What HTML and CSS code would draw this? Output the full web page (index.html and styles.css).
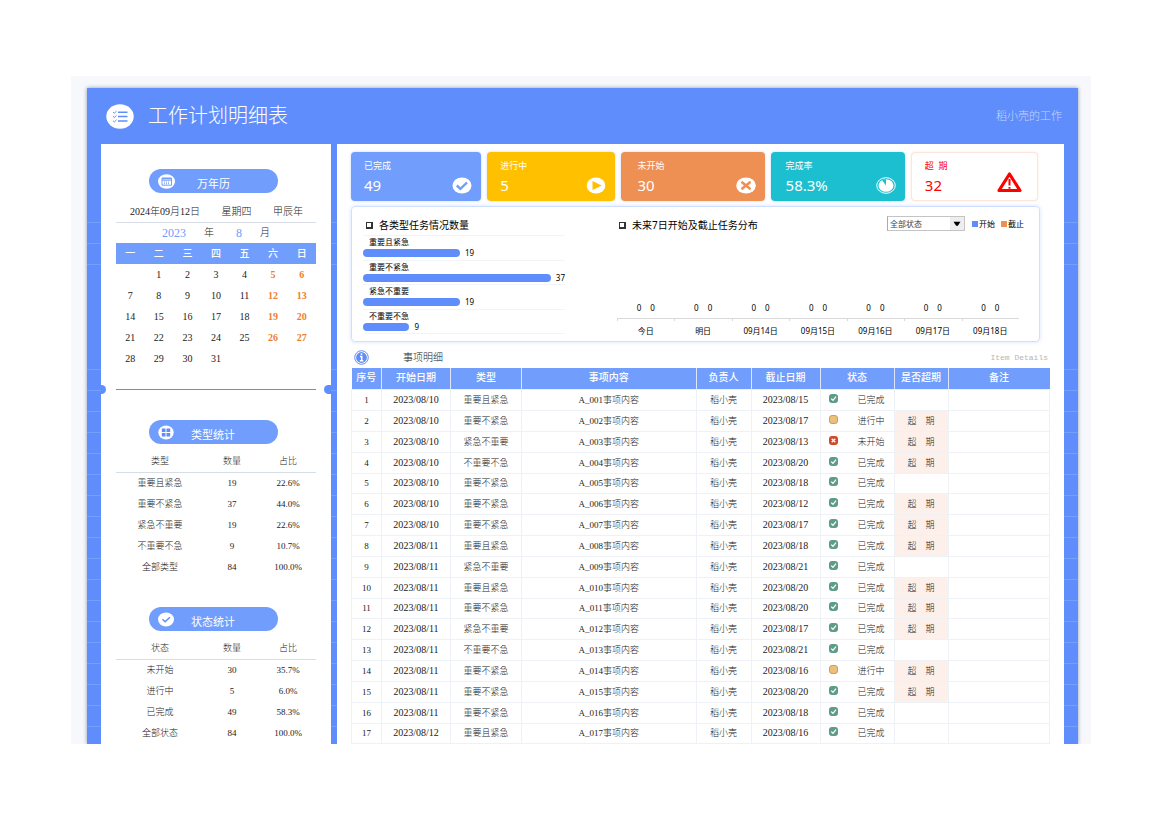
FILE: index.html
```html
<!DOCTYPE html>
<html lang="zh-CN">
<head>
<meta charset="utf-8">
<title>工作计划明细表</title>
<link rel="stylesheet" href="styles.css">
</head>
<body>
<svg class="symbols" aria-hidden="true">
  <symbol id="done" viewBox="0 0 9 9"><rect width="9" height="9" rx="3" fill="#5d9c86"/><path d="M2.2 4.6 4 6.3 7 2.7" fill="none" stroke="#fff" stroke-width="1.3"/></symbol>
  <symbol id="doing" viewBox="0 0 9 9"><rect x=".5" y=".5" width="8" height="8" rx="2.6" fill="#eac07a" stroke="#c79d5c"/></symbol>
  <symbol id="todo" viewBox="0 0 9 9"><rect width="9" height="9" rx="3" fill="#cf4a2c"/><path d="m2.7 2.7 3.6 3.6m0-3.6L2.7 6.3" fill="none" stroke="#fff" stroke-width="1.3"/></symbol>
</svg>
<div class="sheet">
  <div class="board">
    <header class="top">
      <svg class="logo" viewBox="0 0 28 25"><ellipse cx="14" cy="12.5" rx="13.7" ry="12.2" fill="#fff"/><path d="M12 8.2h9.5M12 12.6h9.5M12 17h9.5" stroke="#5f8dfb" stroke-width="1.5"/><path d="m7 8 1.3 1.2 2.2-2.1M7 12.3l1.3 1.2 2.2-2.1M7 16.8 8.3 18l2.2-2.1" fill="none" stroke="#5f8dfb"/></svg>
      <h1>工作计划明细表</h1>
      <span class="owner">稻小壳的工作</span>
    </header>
    <div class="body">
      <aside class="side">
        <section>
          <h2 class="pill">
            <svg viewBox="0 0 17 15"><ellipse cx="8.5" cy="7.5" rx="8.5" ry="7.3" fill="#fff"/><path d="M4 4.2h9.5v7H4zM4 6.2h9.5M6 8h1m1 0h1m1 0h1m-5 1.7h1m1 0h1m1 0h1" fill="none" stroke="#719dfd"/><path d="M4 4.5h9.5" stroke="#719dfd" stroke-width="1.6"/></svg>
            <span class="short">万年历</span>
          </h2>
          <p class="today"><span>2024年09月12日</span><span>星期四</span><span>甲辰年</span></p>
          <p class="month"><b>2023</b><span>年</span><b>8</b><span>月</span></p>
          <table class="calendar">
            <thead><tr><th>一</th><th>二</th><th>三</th><th>四</th><th>五</th><th>六</th><th>日</th></tr></thead>
            <tbody>
              <tr><td></td><td>1</td><td>2</td><td>3</td><td>4</td><td>5</td><td>6</td></tr>
              <tr><td>7</td><td>8</td><td>9</td><td>10</td><td>11</td><td>12</td><td>13</td></tr>
              <tr><td>14</td><td>15</td><td>16</td><td>17</td><td>18</td><td>19</td><td>20</td></tr>
              <tr><td>21</td><td>22</td><td>23</td><td>24</td><td>25</td><td>26</td><td>27</td></tr>
              <tr><td>28</td><td>29</td><td>30</td><td>31</td><td></td><td></td><td></td></tr>
            </tbody>
          </table>
        </section>
        <div class="tear"><i></i><hr><i></i></div>
        <section>
          <h2 class="pill">
            <svg viewBox="0 0 17 15"><ellipse cx="8" cy="7.5" rx="7.7" ry="7" fill="#fff"/><path d="M3.8 3.500h3.700v3.500H3.800zM8.500 3.500h3.700v3.500H8.500zM3.800 8h3.700v3.500H3.800zM8.500 8h3.700v3.500H8.500z" fill="#5f8dfb"/></svg>
            <span>类型统计</span>
          </h2>
          <table class="stats">
            <thead><tr><th>类型</th><th>数量</th><th>占比</th></tr></thead>
            <tbody>
              <tr><td>重要且紧急</td><td>19</td><td>22.6%</td></tr>
              <tr><td>重要不紧急</td><td>37</td><td>44.0%</td></tr>
              <tr><td>紧急不重要</td><td>19</td><td>22.6%</td></tr>
              <tr><td>不重要不急</td><td>9</td><td>10.7%</td></tr>
              <tr><td>全部类型</td><td>84</td><td>100.0%</td></tr>
            </tbody>
          </table>
        </section>
        <section>
          <h2 class="pill">
            <svg viewBox="0 0 17 15"><ellipse cx="8" cy="7.5" rx="8" ry="7" fill="#fff"/><path d="m4.5 7.3 2.6 2.4 4.8-4.5" fill="none" stroke="#5f8dfb" stroke-width="1.5"/></svg>
            <span>状态统计</span>
          </h2>
          <table class="stats">
            <thead><tr><th>状态</th><th>数量</th><th>占比</th></tr></thead>
            <tbody>
              <tr><td>未开始</td><td>30</td><td>35.7%</td></tr>
              <tr><td>进行中</td><td>5</td><td>6.0%</td></tr>
              <tr><td>已完成</td><td>49</td><td>58.3%</td></tr>
              <tr><td>全部状态</td><td>84</td><td>100.0%</td></tr>
            </tbody>
          </table>
        </section>
      </aside>

      <main class="main">
        <div class="cards">
          <div class="card blue"><div><p>已完成</p><strong>49</strong></div>
            <svg viewBox="0 0 20 17"><ellipse cx="10" cy="8.5" rx="9.5" ry="8" fill="#fff"/><path d="m4.8 8.5 3.6 3.3 6.6-6.3" fill="none" stroke="#719dfd" stroke-width="2.4"/></svg></div>
          <div class="card yellow"><div><p>进行中</p><strong>5</strong></div>
            <svg viewBox="0 0 20 17"><ellipse cx="10" cy="8.5" rx="9.3" ry="8" fill="#fff"/><path d="M6.5 4v9l9.2-4.5z" fill="#ffc000"/></svg></div>
          <div class="card orange"><div><p>未开始</p><strong>30</strong></div>
            <svg viewBox="0 0 20 17"><ellipse cx="10" cy="8.5" rx="9.8" ry="8" fill="#fff"/><path d="m6.300 5.500 7.400 6m0-6-7.400 6" stroke="#ee8f54" stroke-width="2.6" stroke-linecap="round"/></svg></div>
          <div class="card teal"><div><p>完成率</p><strong>58.3%</strong></div>
            <svg viewBox="0 0 20 17"><ellipse cx="10" cy="8.5" rx="9.3" ry="7.8" fill="none" stroke="#fff"/><ellipse cx="10" cy="8.5" rx="7.5" ry="6.3" fill="#fff"/><path d="M10 8.500V2L6 3z" fill="#1bbfcf"/></svg></div>
          <div class="card late"><div><p>超&nbsp; 期</p><strong>32</strong></div>
            <svg class="warn" viewBox="0 0 27 22"><path d="M13.500 3 24 19.500H3z" fill="#fff" stroke="#f00" stroke-width="3.200" stroke-linejoin="round"/><path d="M13.500 8v6.500M13.500 16v1.800" stroke="#f00" stroke-width="2"/></svg></div>
        </div>

        <div class="charts">
          <section class="types">
            <h3>各类型任务情况数量</h3>
            <ul>
              <li><span>重要且紧急</span><div><i style="width:48%"></i>19</div></li>
              <li><span>重要不紧急</span><div><i style="width:93%"></i>37</div></li>
              <li><span>紧急不重要</span><div><i style="width:48%"></i>19</div></li>
              <li><span>不重要不急</span><div><i style="width:23%"></i>9</div></li>
            </ul>
          </section>
          <section class="week">
            <div class="week-head">
              <h3>未来7日开始及截止任务分布</h3>
              <div class="picker">
                <select aria-label="状态筛选"><option>全部状态</option><option>未开始</option><option>进行中</option><option>已完成</option></select>
                <svg viewBox="0 0 14 15"><path d="M3 5.500h8L8 10H6z"/></svg>
              </div>
              <span class="key start">开始</span><span class="key end">截止</span>
            </div>
            <ol>
              <li><p><b>0</b><b>0</b></p><span>今日</span></li>
              <li><p><b>0</b><b>0</b></p><span>明日</span></li>
              <li><p><b>0</b><b>0</b></p><span>09月14日</span></li>
              <li><p><b>0</b><b>0</b></p><span>09月15日</span></li>
              <li><p><b>0</b><b>0</b></p><span>09月16日</span></li>
              <li><p><b>0</b><b>0</b></p><span>09月17日</span></li>
              <li><p><b>0</b><b>0</b></p><span>09月18日</span></li>
            </ol>
          </section>
        </div>

        <div class="list-head">
          <svg viewBox="0 0 15 15"><circle cx="7.500" cy="7.500" r="6.800" fill="#fff" stroke="#5f8dfb"/><circle cx="7.500" cy="7.500" r="5.400" fill="#5f8dfb"/><path d="M7.500 3.300v1.800M6 6.500h1.700v4M5.800 10.800h3.500" fill="none" stroke="#fff" stroke-width="1.500"/></svg>
          <h3>事项明细</h3>
          <span>Item Details</span>
        </div>
        <table class="items">
          <colgroup><col class="c-no"><col class="c-date"><col class="c-type"><col class="c-text"><col class="c-who"><col class="c-date"><col class="c-state"><col class="c-late"><col></colgroup>
          <thead><tr><th>序号</th><th>开始日期</th><th>类型</th><th>事项内容</th><th>负责人</th><th>截止日期</th><th>状态</th><th>是否超期</th><th>备注</th></tr></thead>
          <tbody>
            <tr><td>1</td><td class="d">2023/08/10</td><td>重要且紧急</td><td>A_001事项内容</td><td>稻小壳</td><td class="d">2023/08/15</td><td><div class="state"><svg><use href="#done"/></svg>已完成</div></td><td></td><td></td></tr>
            <tr><td>2</td><td class="d">2023/08/10</td><td>重要不紧急</td><td>A_002事项内容</td><td>稻小壳</td><td class="d">2023/08/17</td><td><div class="state"><svg><use href="#doing"/></svg>进行中</div></td><td class="over">超　期</td><td></td></tr>
            <tr><td>3</td><td class="d">2023/08/10</td><td>紧急不重要</td><td>A_003事项内容</td><td>稻小壳</td><td class="d">2023/08/13</td><td><div class="state"><svg><use href="#todo"/></svg>未开始</div></td><td class="over">超　期</td><td></td></tr>
            <tr><td>4</td><td class="d">2023/08/10</td><td>不重要不急</td><td>A_004事项内容</td><td>稻小壳</td><td class="d">2023/08/20</td><td><div class="state"><svg><use href="#done"/></svg>已完成</div></td><td class="over">超　期</td><td></td></tr>
            <tr><td>5</td><td class="d">2023/08/10</td><td>重要不紧急</td><td>A_005事项内容</td><td>稻小壳</td><td class="d">2023/08/18</td><td><div class="state"><svg><use href="#done"/></svg>已完成</div></td><td></td><td></td></tr>
            <tr><td>6</td><td class="d">2023/08/10</td><td>重要不紧急</td><td>A_006事项内容</td><td>稻小壳</td><td class="d">2023/08/12</td><td><div class="state"><svg><use href="#done"/></svg>已完成</div></td><td class="over">超　期</td><td></td></tr>
            <tr><td>7</td><td class="d">2023/08/10</td><td>重要不紧急</td><td>A_007事项内容</td><td>稻小壳</td><td class="d">2023/08/17</td><td><div class="state"><svg><use href="#done"/></svg>已完成</div></td><td class="over">超　期</td><td></td></tr>
            <tr><td>8</td><td class="d">2023/08/11</td><td>重要且紧急</td><td>A_008事项内容</td><td>稻小壳</td><td class="d">2023/08/18</td><td><div class="state"><svg><use href="#done"/></svg>已完成</div></td><td class="over">超　期</td><td></td></tr>
            <tr><td>9</td><td class="d">2023/08/11</td><td>紧急不重要</td><td>A_009事项内容</td><td>稻小壳</td><td class="d">2023/08/21</td><td><div class="state"><svg><use href="#done"/></svg>已完成</div></td><td></td><td></td></tr>
            <tr><td>10</td><td class="d">2023/08/11</td><td>重要且紧急</td><td>A_010事项内容</td><td>稻小壳</td><td class="d">2023/08/20</td><td><div class="state"><svg><use href="#done"/></svg>已完成</div></td><td class="over">超　期</td><td></td></tr>
            <tr><td>11</td><td class="d">2023/08/11</td><td>重要不紧急</td><td>A_011事项内容</td><td>稻小壳</td><td class="d">2023/08/20</td><td><div class="state"><svg><use href="#done"/></svg>已完成</div></td><td class="over">超　期</td><td></td></tr>
            <tr><td>12</td><td class="d">2023/08/11</td><td>紧急不重要</td><td>A_012事项内容</td><td>稻小壳</td><td class="d">2023/08/17</td><td><div class="state"><svg><use href="#done"/></svg>已完成</div></td><td class="over">超　期</td><td></td></tr>
            <tr><td>13</td><td class="d">2023/08/11</td><td>不重要不急</td><td>A_013事项内容</td><td>稻小壳</td><td class="d">2023/08/21</td><td><div class="state"><svg><use href="#done"/></svg>已完成</div></td><td></td><td></td></tr>
            <tr><td>14</td><td class="d">2023/08/11</td><td>重要不紧急</td><td>A_014事项内容</td><td>稻小壳</td><td class="d">2023/08/16</td><td><div class="state"><svg><use href="#doing"/></svg>进行中</div></td><td class="over">超　期</td><td></td></tr>
            <tr><td>15</td><td class="d">2023/08/11</td><td>重要不紧急</td><td>A_015事项内容</td><td>稻小壳</td><td class="d">2023/08/20</td><td><div class="state"><svg><use href="#done"/></svg>已完成</div></td><td class="over">超　期</td><td></td></tr>
            <tr><td>16</td><td class="d">2023/08/11</td><td>重要不紧急</td><td>A_016事项内容</td><td>稻小壳</td><td class="d">2023/08/18</td><td><div class="state"><svg><use href="#done"/></svg>已完成</div></td><td></td><td></td></tr>
            <tr><td>17</td><td class="d">2023/08/12</td><td>重要且紧急</td><td>A_017事项内容</td><td>稻小壳</td><td class="d">2023/08/16</td><td><div class="state"><svg><use href="#done"/></svg>已完成</div></td><td></td><td></td></tr>
          </tbody>
        </table>
      </main>
    </div>
  </div>
</div>
</body>
</html>
```
FILE: styles.css
```css
:root {
  --blue: #5f8dfb;
  --soft: #719dfd;
  --orange: #ee8f54;
  --line: #eef2f7;
  --serif: "Liberation Serif", "Noto Sans CJK SC", serif;
  --sans: "Noto Sans", "Noto Sans CJK SC", sans-serif;
}
*, *::before { box-sizing: border-box; }
body { margin: 0; padding: 76px 79px 24px 71px; background: #fff; color: #222; font: 300 9px/14px var(--serif); }
h1, h2, h3, p, ul, ol { margin: 0; padding: 0; font-weight: inherit; list-style: none; }
table { width: 100%; border-collapse: collapse; table-layout: fixed; text-align: center; }
th, td { padding: 0; font-weight: inherit; }
svg { display: block; flex: none; }
.symbols { position: absolute; width: 0; height: 0; }

.sheet { padding: 12px 13px 0 16px; background: #f6f8fc; overflow: hidden; }
.board { background: var(--blue); box-shadow: 0 0 4px #8f9ab0; }
.top { display: flex; align-items: center; height: 56px; padding: 0 16px 0 19px; color: #fff; }
.logo { width: 28px; height: 25px; }
h1 { margin-left: 14px; font-size: 20px; line-height: 28px; }
.owner { margin-left: auto; color: #c6d7ff; font-size: 11px; line-height: 16px; }

.body {
  display: flex; gap: 6px; padding: 0 14px;
  background:
    linear-gradient(var(--blue), var(--blue)) 0 1px / 100% 77px no-repeat,
    linear-gradient(var(--blue), var(--blue)) 0 121px / 100% 103px no-repeat,
    repeating-linear-gradient(#769efc 0 1px, var(--blue) 1px 21px) 0 15px / 100% 100%;
}
.side { flex: none; width: 230px; padding: 25px 15px 0; background: #fff; }
.pill { display: flex; align-items: center; width: 129px; height: 24px; margin: 0 auto 0 33px; padding-left: 9px; border-radius: 12px; background: var(--soft); color: #fff; font: 400 11px/16px var(--sans); }
.pill svg { width: 17px; height: 15px; }
.pill span { margin-left: 16px; padding-top: 6px; }
.pill .short { margin-left: 22px; }
.today { display: flex; justify-content: space-between; height: 22px; margin-top: 8px; padding: 4px 13px 3px 14px; border-bottom: 1px solid #d9dde6; font-size: 10px; }
.month { display: grid; grid-template-columns: 27px 10px 10px 10px; column-gap: 18px; align-items: center; height: 20px; padding-left: 43px; font-size: 10px; }
.month b { color: var(--soft); font-weight: 400; font-size: 12px; text-align: right; }
.calendar { font-size: 10px; }
.calendar tr, .stats tr { height: 21px; }
.calendar thead { background: var(--soft); color: #fff; }
.calendar th { font-weight: 500; }
.calendar td:nth-child(n+6) { color: #ed7d31; font-weight: 700; }
.tear { display: flex; align-items: center; height: 9px; margin: 16px -15px 26px; }
.tear i { width: 5px; height: 9px; border-radius: 0 5px 5px 0; background: var(--blue); }
.tear i:last-child { width: 7px; border-radius: 5px 0 0 5px; }
.tear hr { flex: 1; margin: 0 15px 0 10px; margin-right: 8px; border: 0; border-top: 1px solid var(--blue); }
.stats { margin-top: 7px; }
.stats thead { border-bottom: 1px solid #d5dde6; }
.stats th { width: 28%; }
.stats th:first-child { width: 44%; }
section + section { margin-top: 30px; }

.main { flex: 1; min-width: 0; padding: 8px 14px 0; background: #fff; }
.cards { display: grid; grid-template-columns: 130fr 128fr 143fr 134fr 127fr; gap: 6px; margin-right: 12px; }
.card { display: flex; justify-content: space-between; height: 49px; padding: 7px 9px 5px 13px; border-radius: 4px; color: #fff; font-family: var(--sans); font-weight: 400; box-shadow: 0 0 3px #c9d8ff; }
.card strong { display: block; font-weight: 400; font-size: 15px; line-height: 24px; }
.card svg { align-self: flex-end; width: 20px; height: 17px; margin-bottom: 2px; }
.blue { background: var(--soft); }
.yellow { background: #ffc000; }
.orange { padding-left: 16px; background: var(--orange); }
.teal { padding-left: 15px; background: #1bbfcf; }
.late { padding-top: 6px; border: 1px solid #fde5d9; background: #fff; color: #f00; box-shadow: 0 0 2px #fde5d9; }
.card .warn { width: 27px; height: 22px; margin-right: 5px; }

.charts { display: flex; height: 136px; margin: 5px 10px 0 0; padding: 9px 15px 0 11px; border: 1px solid #d0deff; border-radius: 4px; box-shadow: 0 0 4px #d5e2ff; color: #000; font: 400 8px/12px var(--sans); }
.charts section { margin: 0; }
.charts h3 { display: flex; align-items: center; gap: 6px; padding-left: 3px; font-size: 10px; line-height: 18px; }
.charts h3::before { content: ""; width: 7px; height: 7px; border: 1px solid #333; border-width: 1px 2px 2px 1px; }
.types { flex: none; width: 202px; }
.types ul { margin-top: 1px; border-top: 1px solid #f3f4f6; }
.types li { height: 25px; border-bottom: 1px solid #f3f4f6; }
.types li:nth-child(even) { height: 24px; }
.types span { display: block; padding-left: 6px; }
.types div { display: flex; align-items: center; gap: 5px; height: 10px; white-space: nowrap; }
.types i { flex: none; height: 8px; border-radius: 4px; background: var(--blue); }
.charts .week { flex: 1; display: flex; flex-direction: column; margin-left: 52px; }
.week-head { display: flex; align-items: center; }
.week-head h3 { padding-left: 2px; margin-right: auto; }
.picker { display: flex; width: 78px; height: 15px; margin: -3px 7px 0 0; border: 1px solid #c4c4c4; border-left-color: #aaa; }
.picker select { flex: 1; min-width: 0; padding: 0 2px; border: 0; appearance: none; background: #fff; color: #444; font: 400 8px/12px var(--sans); }
.picker svg { width: 14px; height: 13px; background: #eee; }
.key { display: flex; align-items: center; gap: 1px; margin-top: -3px; }
.key::before { content: ""; width: 6px; height: 6px; background: var(--blue); }
.end { margin-left: 6px; }
.end::before { background: var(--orange); }
.week ol { display: flex; margin: auto 5px 4px 0; text-align: center; }
.week li { flex: 1; }
.week p { display: flex; justify-content: center; gap: 9px; height: 17px; border-bottom: 1px solid #d9d9d9; }
.week b { font-weight: 400; }
.week li span { display: block; height: 18px; padding-top: 6px; background: linear-gradient(#d9d9d9, #d9d9d9) 0 0 / 1px 2px no-repeat; }

.list-head { display: flex; align-items: center; height: 26px; padding: 5px 2px 0 3px; }
.list-head svg { width: 15px; height: 15px; }
.list-head h3 { margin-left: 34px; font-size: 10px; }
.list-head span { margin-left: auto; color: #b5b5b5; font: 400 8px/14px "Liberation Mono", monospace; }
.items tr { height: 21px; }
.items tbody tr:nth-child(6n+5) { height: 20px; }
.items thead { background: var(--soft); color: #fff; font-size: 10px; }
.items th { border: solid #dce7ff; border-width: 0 1px; font-weight: 500; }
.items th:first-child { border-left: 0; }
.items th:last-child { border-right: 0; }
.items td { border: 1px solid var(--line); }
.items .d { font-size: 10px; }
.items .over { background: #fdf0ea; }
.c-no { width: 30px; }
.c-date { width: 69px; }
.c-type { width: 71px; }
.c-text { width: 25%; }
.c-who { width: 55px; }
.c-state { width: 74px; }
.c-late { width: 54px; }
.state { display: flex; padding-left: 8px; gap: 20px; }
.state svg { width: 9px; height: 9px; margin-top: 1px; }
```
